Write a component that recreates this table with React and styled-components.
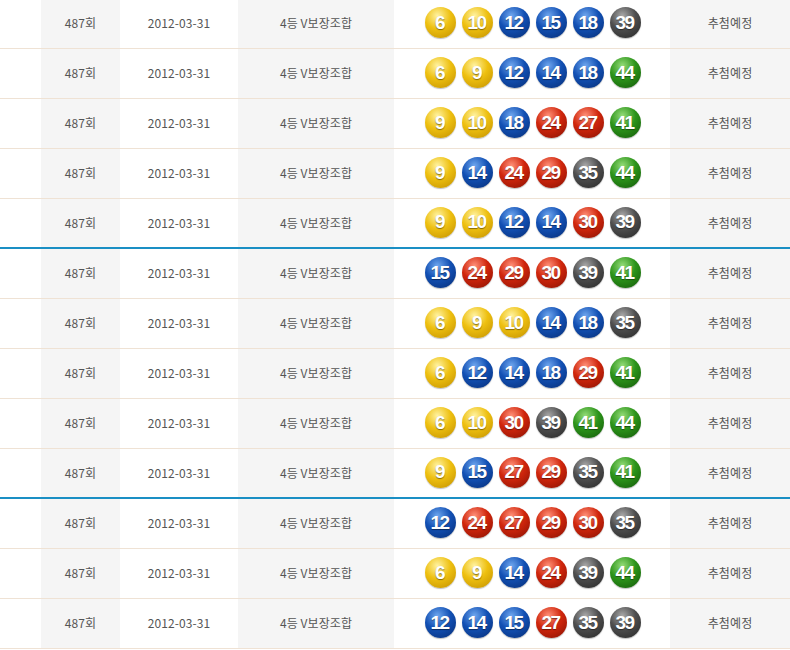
import React from 'react';
import styled, { createGlobalStyle } from 'styled-components';

const GlobalStyle = createGlobalStyle`
  html, body {
    margin: 0;
    padding: 0;
    background: #fff;
  }
  body {
    font-family: "Noto Sans CJK KR", "Liberation Sans", sans-serif;
    overflow: hidden;
  }
`;

const Table = styled.div`
  width: 790px;
  margin-top: -1px;
`;

const Row = styled.div`
  display: grid;
  grid-template-columns: 41px 79px 118px 156px 276px 120px;
  border-bottom: ${(p) => (p.$group ? '2px solid #1a8fc4' : '1px solid #efe2d4')};
  box-shadow: ${(p) => (p.$group ? 'inset 0 -1px 0 #0c74a8' : 'none')};
  height: ${(p) => (p.$group ? '48px' : '49px')};
`;

const Cell = styled.div`
  display: flex;
  align-items: center;
  justify-content: center;
  padding-bottom: 2px;
  background: ${(p) => (p.$shade ? '#f5f5f5' : '#fff')};
  color: #555;
  font-size: 12px;
  letter-spacing: 0.1px;
  white-space: nowrap;
`;

const Balls = styled.div`
  display: flex;
  gap: 6px;
  padding-left: 1px;
`;

const palette = {
  yellow: ['#fff2a0', '#eec010', '#c08e00'],
  blue: ['#6ea6ee', '#1250b4', '#062c74'],
  red: ['#ff9078', '#d0260c', '#861002'],
  gray: ['#a8a8a8', '#4e4e4e', '#262626'],
  green: ['#94dc78', '#2c941a', '#125608'],
};

const colorOf = (n) => {
  if (n <= 10) return 'yellow';
  if (n <= 20) return 'blue';
  if (n <= 30) return 'red';
  if (n <= 40) return 'gray';
  return 'green';
};

const Ball = styled.span`
  width: 31px;
  height: 31px;
  border-radius: 50%;
  display: flex;
  align-items: center;
  justify-content: center;
  background: ${(p) => {
    const [hi, mid, lo] = palette[p.$color];
    return `radial-gradient(circle at 40% 28%, ${hi} 0%, ${mid} 45%, ${lo} 100%)`;
  }};
  box-shadow: 0 1px 1px rgba(0, 0, 0, 0.25);
  color: #fff;
  font-family: "Liberation Sans", "DejaVu Sans", sans-serif;
  font-weight: bold;
  font-size: 19px;
  letter-spacing: -1.5px;
  text-indent: -1px;
  text-shadow: 0 1px 1px rgba(0, 0, 0, 0.45);
`;

const draws = [
  [6, 10, 12, 15, 18, 39],
  [6, 9, 12, 14, 18, 44],
  [9, 10, 18, 24, 27, 41],
  [9, 14, 24, 29, 35, 44],
  [9, 10, 12, 14, 30, 39],
  [15, 24, 29, 30, 39, 41],
  [6, 9, 10, 14, 18, 35],
  [6, 12, 14, 18, 29, 41],
  [6, 10, 30, 39, 41, 44],
  [9, 15, 27, 29, 35, 41],
  [12, 24, 27, 29, 30, 35],
  [6, 9, 14, 24, 39, 44],
  [12, 14, 15, 27, 35, 39],
];

export default function App() {
  return (
    <>
      <GlobalStyle />
      <Table>
        {draws.map((nums, i) => (
          <Row key={i} $group={i === 4 || i === 9}>
            <Cell />
            <Cell $shade>487회</Cell>
            <Cell>2012-03-31</Cell>
            <Cell $shade>4등 V보장조합</Cell>
            <Cell>
              <Balls>
                {nums.map((n) => (
                  <Ball key={n} $color={colorOf(n)}>{n}</Ball>
                ))}
              </Balls>
            </Cell>
            <Cell $shade>추첨예정</Cell>
          </Row>
        ))}
      </Table>
    </>
  );
}
